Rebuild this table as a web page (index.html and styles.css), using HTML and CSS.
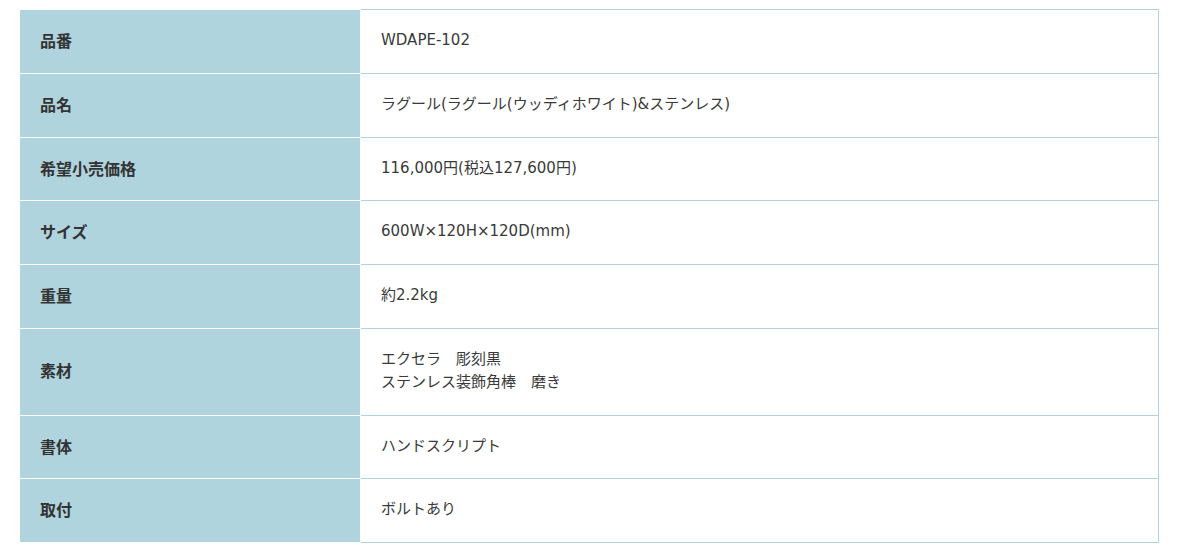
FILE: index.html
```html
<!DOCTYPE html>
<html lang="ja">
<head>
<meta charset="utf-8">
<link rel="stylesheet" href="styles.css">
</head>
<body>
<table class="spec">
  <tbody>
    <tr><th>品番</th><td>WDAPE-102</td></tr>
    <tr><th>品名</th><td>ラグール(ラグール(ウッディホワイト)&amp;ステンレス)</td></tr>
    <tr><th>希望小売価格</th><td>116,000円(税込127,600円)</td></tr>
    <tr><th>サイズ</th><td>600W×120H×120D(mm)</td></tr>
    <tr><th>重量</th><td>約2.2kg</td></tr>
    <tr><th>素材</th><td>エクセラ　彫刻黒<br>ステンレス装飾角棒　磨き</td></tr>
    <tr><th>書体</th><td>ハンドスクリプト</td></tr>
    <tr><th>取付</th><td>ボルトあり</td></tr>
  </tbody>
</table>
</body>
</html>
```

FILE: styles.css
```css
html, body {
  margin: 0;
  padding: 0;
  background: #fff;
}
body {
  font-family: "DejaVu Sans", "Noto Sans CJK JP", sans-serif;
  font-size: 15px;
  color: #333;
}
.spec {
  border-collapse: collapse;
  width: 1140px;
  margin: 9px 0 0 19px;
  table-layout: fixed;
}
.spec th {
  width: 300px;
  background: #afd4dd;
  border: 1px solid #fff;
  text-align: left;
  font-family: "Noto Sans CJK JP", sans-serif;
  font-size: 16px;
  font-weight: bold;
  padding: 19px 20px 21px;
  line-height: 22.8px;
  vertical-align: middle;
}
.spec td {
  border: 1px solid #afd4dd;
  padding: 19px 20px 21px;
  line-height: 22.8px;
  vertical-align: middle;
  color: #3a3a3a;
}
```
